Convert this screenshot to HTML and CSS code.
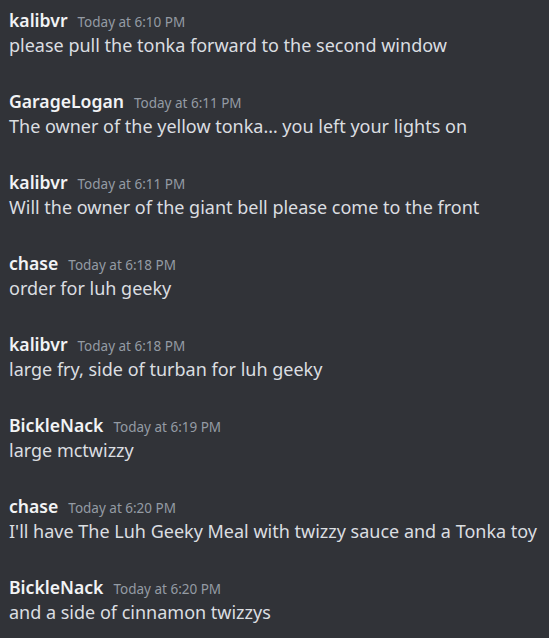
FILE: index.html
```html
<!DOCTYPE html>
<html>
<head>
<meta charset="utf-8">
<link rel="stylesheet" href="styles.css">
</head>
<body>
<div class="chat">
  <div class="msg">
    <div class="header"><span class="name">kalibvr</span><span class="time">Today at 6:10 PM</span></div>
    <div class="content">please pull the tonka forward to the second window</div>
  </div>
  <div class="msg">
    <div class="header"><span class="name">GarageLogan</span><span class="time">Today at 6:11 PM</span></div>
    <div class="content">The owner of the yellow tonka… you left your lights on</div>
  </div>
  <div class="msg">
    <div class="header"><span class="name">kalibvr</span><span class="time">Today at 6:11 PM</span></div>
    <div class="content">Will the owner of the giant bell please come to the front</div>
  </div>
  <div class="msg">
    <div class="header"><span class="name">chase</span><span class="time">Today at 6:18 PM</span></div>
    <div class="content">order for luh geeky</div>
  </div>
  <div class="msg">
    <div class="header"><span class="name">kalibvr</span><span class="time">Today at 6:18 PM</span></div>
    <div class="content">large fry, side of turban for luh geeky</div>
  </div>
  <div class="msg">
    <div class="header"><span class="name">BickleNack</span><span class="time">Today at 6:19 PM</span></div>
    <div class="content">large mctwizzy</div>
  </div>
  <div class="msg">
    <div class="header"><span class="name">chase</span><span class="time">Today at 6:20 PM</span></div>
    <div class="content">I'll have The Luh Geeky Meal with twizzy sauce and a Tonka toy</div>
  </div>
  <div class="msg">
    <div class="header"><span class="name">BickleNack</span><span class="time">Today at 6:20 PM</span></div>
    <div class="content">and a side of cinnamon twizzys</div>
  </div>
</div>
</body>
</html>
```
FILE: styles.css
```css
html, body {
  margin: 0;
  padding: 0;
  background: #313338;
  height: 100%;
  overflow: hidden;
}
body {
  font-family: "Noto Sans", "Open Sans", sans-serif;
}
.chat {
  display: flex;
  flex-direction: column;
  gap: 30px;
  padding: 7px 0 0 9px;
}
.msg {
  display: flex;
  flex-direction: column;
}
.header {
  display: flex;
  align-items: baseline;
  gap: 10px;
  line-height: 26px;
  height: 26px;
}
.name {
  color: #f2f3f5;
  font-size: 17.6px;
  font-weight: 600;
}
.time {
  color: #949ba4;
  font-size: 13.5px;
}
.content {
  color: #dbdee1;
  font-size: 18px;
  line-height: 25px;
  white-space: nowrap;
}
```
